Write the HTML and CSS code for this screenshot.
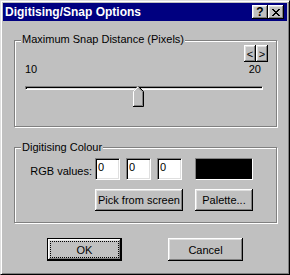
FILE: index.html
```html
<!DOCTYPE html>
<html lang="en">
<head>
<meta charset="utf-8">
<title>Digitising/Snap Options</title>
<link rel="stylesheet" href="styles.css">
</head>
<body>
<div class="window">
  <div class="titlebar">
    <span class="title">Digitising/Snap Options</span>
    <div class="title-buttons">
      <button class="tbtn tbtn-help">?</button>
      <button class="tbtn tbtn-close" aria-label="Close">
        <svg width="8" height="7" viewBox="0 0 8 7" shape-rendering="crispEdges"><path fill="#000" d="M0 0h2v1H0zM6 0h2v1H6zM1 1h2v1H1zM5 1h2v1H5zM2 2h4v1H2zM3 3h2v1H3zM2 4h4v1H2zM1 5h2v1H1zM5 5h2v1H5zM0 6h2v1H0zM6 6h2v1H6z"/></svg>
      </button>
    </div>
  </div>
  <div class="content">
    <div class="group group-snap">
      <div class="legend">Maximum Snap Distance (Pixels)</div>
      <div class="spin">
        <button class="spin-btn">&lt;</button><button class="spin-btn">&gt;</button>
      </div>
      <div class="range-labels"><span>10</span><span>20</span></div>
      <div class="slider">
        <div class="track"></div>
        <div class="thumb" style="left:108px">
          <svg width="11" height="21" viewBox="0 0 11 21">
            <polygon points="0,5 5,0 10,5 10,20 0,20" fill="#c0c0c0"/>
            <polyline points="0.5,20 0.5,5.5 5.5,0.5" fill="none" stroke="#fff" stroke-width="1"/>
            <polyline points="5.5,0.5 10.5,5.5 10.5,20.5 0,20.5" fill="none" stroke="#000" stroke-width="1"/>
            <polyline points="5.5,1.8 9.5,5.8 9.5,19.5 1,19.5" fill="none" stroke="#808080" stroke-width="1"/>
          </svg>
        </div>
      </div>
    </div>
    <div class="group group-colour">
      <div class="legend">Digitising Colour</div>
      <div class="rgb-row">
        <label class="rgb-label">RGB values:</label>
        <input class="field" type="text" value="0">
        <input class="field" type="text" value="0">
        <input class="field" type="text" value="0">
        <div class="swatch"></div>
      </div>
      <div class="btn-row">
        <button class="btn btn-pick">Pick from screen</button>
        <button class="btn btn-palette">Palette...</button>
      </div>
    </div>
    <div class="dialog-buttons">
      <button class="btn btn-dlg btn-default">OK</button>
      <button class="btn btn-dlg">Cancel</button>
    </div>
  </div>
</div>
</body>
</html>
```

FILE: styles.css
```css
* {
  box-sizing: border-box;
}

body {
  margin: 0;
  font: 11px "Liberation Sans", Arial, sans-serif;
  color: #000;
  background: #c0c0c0;
}

.window {
  width: 290px;
  height: 275px;
  background: #c0c0c0;
  border: 1px solid;
  border-color: #dfdfdf #000 #000 #dfdfdf;
  box-shadow: inset 1px 1px #fff, inset -1px -1px #808080;
  padding: 2px;
}

.titlebar {
  height: 18px;
  background: #000080;
  color: #fff;
  display: flex;
  align-items: center;
  padding: 0 3px 0 2px;
}

.title {
  flex: 1;
  font-weight: bold;
  font-size: 12px;
  line-height: 14px;
}

.title-buttons {
  display: flex;
}

.tbtn {
  width: 16px;
  height: 14px;
  padding: 0;
  border: 0;
  background: #c0c0c0;
  color: #000;
  font: bold 12px "Liberation Sans", Arial, sans-serif;
  line-height: 14px;
  display: flex;
  align-items: center;
  justify-content: center;
  box-shadow: inset -1px -1px #000, inset 1px 1px #fff, inset -2px -2px #808080, inset 2px 2px #dfdfdf;
}

.tbtn svg {
  display: block;
}

.group {
  border: 1px solid #808080;
  box-shadow: inset 1px 1px #fff, 1px 1px #fff;
  margin: 0 10px 0 11px;
}

.group-snap {
  margin-top: 19px;
  height: 87px;
}

.group-colour {
  margin-top: 20px;
  height: 76px;
}

.legend {
  width: fit-content;
  margin: -8px 0 0 6px;
  padding: 0 1px;
  background: #c0c0c0;
  line-height: 12px;
}

.group-colour .legend {
  margin-top: -7px;
}

.spin {
  display: flex;
  justify-content: flex-end;
  padding-right: 8px;
}

.spin-btn {
  width: 12px;
  height: 17px;
  padding: 0;
  border: 0;
  background: #c0c0c0;
  color: #000;
  font: 11px "Liberation Sans", Arial, sans-serif;
  box-shadow: inset -1px -1px #000, inset 1px 1px #fff, inset -2px -2px #808080, inset 2px 2px #dfdfdf;
}

.range-labels {
  display: flex;
  justify-content: space-between;
  padding: 0 15px 0 10px;
  margin-top: 1px;
  line-height: 13px;
}

.slider {
  position: relative;
  height: 22px;
  margin: 6px 13px 0 10px;
}

.track {
  margin-top: 10px;
  height: 4px;
  border: 1px solid;
  border-color: #808080 #fff #fff #808080;
  box-shadow: inset 1px 1px #000, inset -1px -1px #dfdfdf;
}

.thumb {
  position: absolute;
  top: 0;
  width: 11px;
  height: 21px;
}

.thumb svg {
  display: block;
}

.rgb-row {
  display: flex;
  align-items: flex-start;
  margin-top: 5px;
}

.rgb-label {
  width: 77px;
  text-align: right;
  margin-top: 7px;
  margin-right: 3px;
  line-height: 13px;
}

.field {
  width: 25px;
  height: 22px;
  margin: 0;
  padding: 0 1px 5px 2px;
  font: 11px "Liberation Sans", Arial, sans-serif;
  line-height: 13px;
  color: #000;
  -webkit-text-fill-color: #000;
  background: #fff;
  border: 1px solid;
  border-color: #808080 #fff #fff #808080;
  box-shadow: inset 1px 1px #000, inset -1px -1px #dfdfdf;
  outline: none;
}

.field + .field {
  margin-left: 6px;
}

.swatch {
  width: 58px;
  height: 22px;
  margin-left: 13px;
  background: #000;
  border: 1px solid;
  border-color: #808080 #fff #fff #808080;
}

.btn-row {
  display: flex;
  margin-top: 9px;
  padding-left: 80px;
  gap: 12px;
}

.btn {
  font: 11px "Liberation Sans", Arial, sans-serif;
  color: #000;
  padding: 0;
  border: 0;
  background: #c0c0c0;
  box-shadow: inset -1px -1px #000, inset 1px 1px #fff, inset -2px -2px #808080, inset 2px 2px #dfdfdf;
}

.btn-pick {
  width: 88px;
  height: 22px;
}

.btn-palette {
  width: 58px;
  height: 22px;
}

.dialog-buttons {
  display: flex;
  justify-content: center;
  gap: 46px;
  margin-top: 15px;
}

.btn-dlg {
  width: 75px;
  height: 23px;
}

.btn-default {
  border: 1px solid #000;
  outline: 1px dotted #000;
  outline-offset: -4px;
}
```
